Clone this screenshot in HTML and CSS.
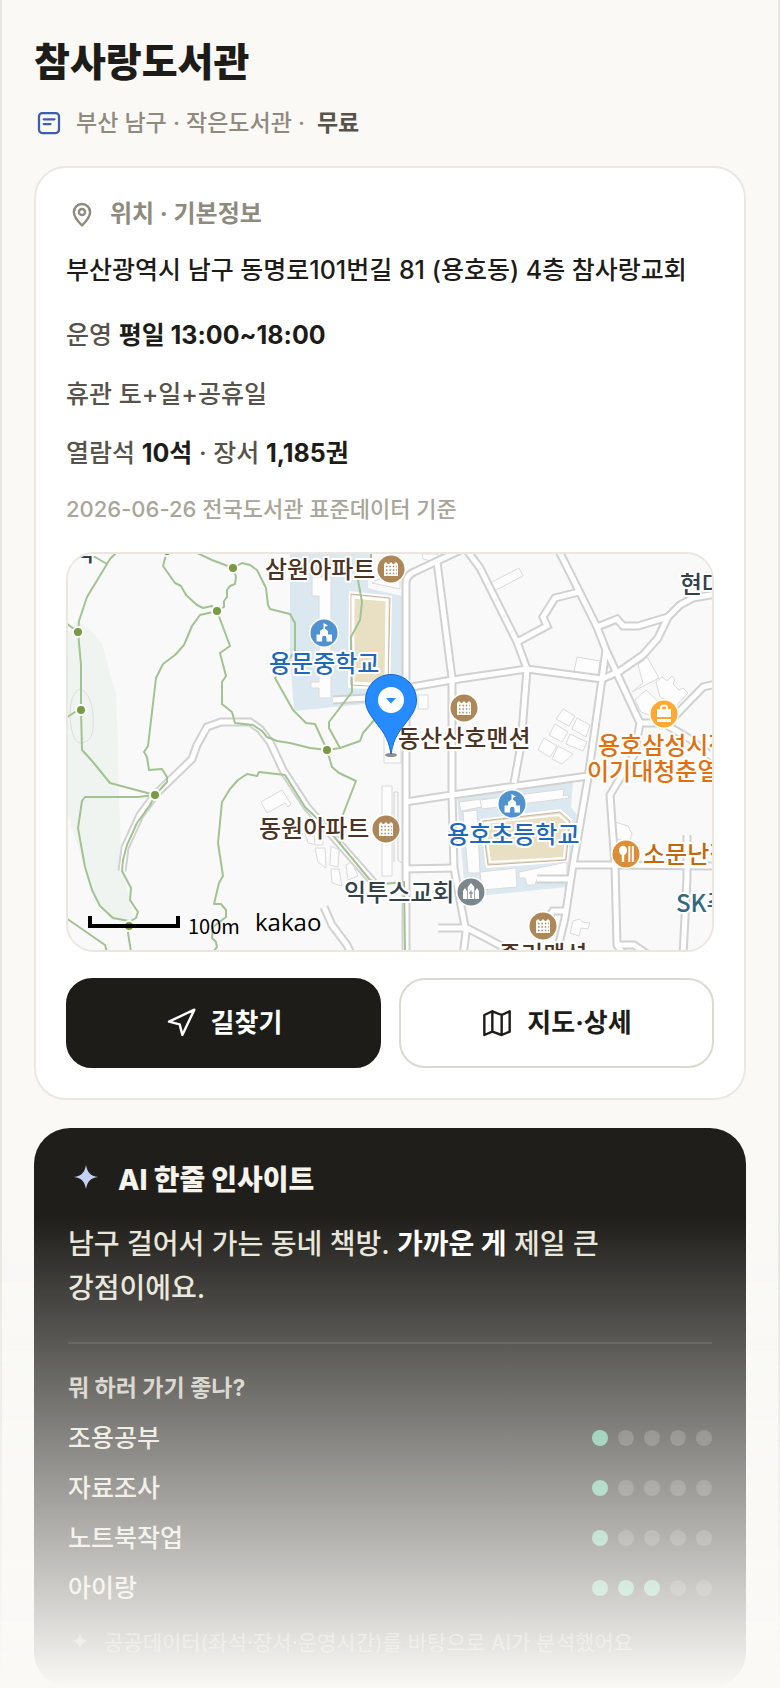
FILE: index.html
```html
<!DOCTYPE html>
<html lang="ko">
<head>
  <meta charset="UTF-8">
  <meta name="viewport" content="width=device-width, initial-scale=1.0">
  <title>참사랑도서관</title>
  <link rel="stylesheet" href="styles.css">
</head>
<body>
  <main class="page">
    <header class="head">
      <h1>참사랑도서관</h1>
      <p class="sub">
        <svg class="icon-kind" viewBox="0 0 24 24" aria-hidden="true">
          <rect x="4" y="4" width="16" height="16" rx="2.6"/>
          <path d="M7.8 9h8.6M7.8 12.8h5.4"/>
        </svg>
        <span>부산 남구 · 작은도서관 ·</span>
        <b>무료</b>
      </p>
    </header>

    <section class="card">
      <h2 class="card-title">
        <svg class="icon" viewBox="0 0 24 24" aria-hidden="true">
          <path d="M12 20.6c-3.6-3.7-6.1-6.6-6.1-10a6.1 6.1 0 0 1 12.2 0c0 3.4-2.5 6.3-6.1 10z"/>
          <circle cx="12" cy="10.5" r="2.3"/>
        </svg>
        위치 · 기본정보
      </h2>
      <p class="address">부산광역시 남구 동명로101번길 81 (용호동) 4층 참사랑교회</p>
      <p class="info">운영 <b>평일 13:00~18:00</b></p>
      <p class="info">휴관 토+일+공휴일</p>
      <p class="info">열람석 <b>10석</b> · 장서 <b>1,185권</b></p>
      <p class="source">2026-06-26 전국도서관 표준데이터 기준</p>

      <div class="map">
        <svg class="map-svg" viewBox="68 554 644 396" preserveAspectRatio="xMidYMid slice" role="img" aria-label="참사랑도서관 주변 지도">
          <defs>
            <g id="poi-apt">
              <circle class="ring" r="15"/>
              <circle r="13.5" fill="#ad8758"/>
              <path d="M-7 7v-12l2-2 2 2h1l2-2 2 2h1l2-2 2 2v12z" fill="#fff"/>
              <path d="M-5-2.5H6M-5 1H6M-5 4.5H6" stroke="#ad8758" stroke-width="1.5" stroke-dasharray="1.5 1.9"/>
            </g>
            <g id="poi-school">
              <circle class="ring" r="15"/>
              <circle r="13.5" fill="#4f92cf"/>
              <path d="M-7.5 8.5V1.5H-4V-2L-.5-4.5V-10L4-7.5.8-6V-4.5L4-2V1.5H8V8.5H2.5V5a2.2 2.2 0 0 0-4.4 0V8.5z" fill="#fff"/>
            </g>
            <g id="roads">
              <path d="M122 871 125 848 140 815 155 795 192 759 197 745 207 727 221 722H250L260 729 270 742 283 770 307 807 375 884"/>
              <path d="M406 956V582Q407 575 414 572L463 549"/>
              <path d="M437 562 452 678 452 795 454 868 466 932 463 956"/>
              <path d="M406 688 452 680 527 669 602 679 620 671 643 655 658 638 668 617 680 605 693 598 716 594"/>
              <path d="M463 545 480 568 517 642 527 669 521 745 514 783"/>
              <path d="M558 549 597 627 606 650 640 723 634 755 610 795 615 865 617 945 625 956"/>
              <path d="M606 650 602 679 588 778 573 865 565 918 556 956"/>
              <path d="M597 627 617 619 623 626H638L668 617"/>
              <path d="M517 642 547 626 543 617 555 598 579 592"/>
              <path d="M640 723H663L690 739 716 760"/>
              <path d="M675 716 703 687 716 684"/>
              <path d="M405 802 452 795 588 776"/>
              <path d="M405 869 454 868"/>
              <path d="M575 865H615L716 866"/>
              <path d="M687 835V878L683 956"/>
              <path d="M438 928H467L490 940 512 952"/>
              <path d="M537 879H571"/>
              <path d="M548 918 553 911H566"/>
              <path d="M324 907 332 925 347 945 352 956"/>
              <path d="M333 700 367 698"/>
              <path d="M617 945H634L650 956"/>
            </g>
          </defs>

          <rect x="68" y="554" width="644" height="396" fill="#f9f9f9"/>

          <!-- park, school grounds -->
          <path fill="#eff4f1" d="M68 632 78 621 88 628 102 643 116 695 118 740 119 800 122 870 131 905 133 920 110 920 90 885 68 815z"/>
          <path class="contour" d="M80 689c8 2 13 16 13 27 1 17-1 25-12 27-8 0-11-17-11-30 0-12 4-22 10-24z"/>
          <path fill="#dce8f0" d="M290 554H370L368 588 402 596V695L365 704 294 711 290 660z"/>
          <path fill="#dce8f0" d="M457 797 573 782 571 807 577 815 570 877 567 887 487 895 465 894z"/>

          <!-- sports fields -->
          <path fill="#fff" d="M349 591 392 596 390 690 348 688z"/>
          <path fill="#e9dfc2" stroke="#cdb3a2" d="M351 594 390 598 388 687 351 685z"/>
          <path fill="none" stroke="#fff" stroke-width="3" d="M353 597 387 600 386 685 353 683z"/>
          <path fill="#fff" d="M480 819 560 809 572 819 568 862 486 868z"/>
          <path fill="#e9dfc2" stroke="#cdb3a2" d="M482 821 560 812 570 821 566 860 488 865z"/>
          <path fill="none" stroke="#fff" stroke-width="2" d="M485 823 559 815 567 822 564 858 490 862z"/>

          <!-- buildings -->
          <g class="building">
            <path d="M312 577H331V698H319V688H311V682H319V596H312z"/>
            <path d="M372 583 400 589 400 578 388 574z"/>
            <path d="M418 695H428V709H418z"/>
            <path d="M459 802 490 798 492 805 461 811z"/>
            <path d="M463 812 477 810 480 873 468 873z"/>
            <path d="M480 800 564 789 563 796 568 795 569 798 482 809z"/>
            <path d="M480 872 516 868 517 887 482 890z"/>
            <path d="M519 872 567 862V875L537 879 535 885H527L525 878H519z"/>
            <path d="M382 786H392V876H382z"/>
            <path d="M384 736 401 736V763H384z"/>
            <path d="M261 802 282 790 291 804 288 807 285 803 267 813z"/>
            <path d="M302 824 311 815 318 845 308 843z"/>
            <path d="M315 848H325L326 868 318 862z"/>
            <path d="M331 846 339 850 338 867 330 865z"/>
            <path d="M331 869H339L342 886 332 883z"/>
            <path d="M346 865 352 862 358 876 348 880z"/>
            <path d="M314 832H323V845H315z"/>
            <path d="M490 583 519 568 523 576 494 591z"/>
            <path d="M577 657 600 661 598 676 574 672z"/>
            <path d="M632 692 643 683 638 665 647 657 659 678z"/>
            <path d="M656 682 662 677 667 681 672 676 675 679 673 684 679 690 683 688 688 693 676 706 660 697z"/>
            <path d="M635 700 646 690 662 705 655 717 641 712z"/>
            <path d="M563 709 575 716 569 726 556 719z"/>
            <path d="M577 718 590 725 586 737 572 729z"/>
            <path d="M555 724 568 732 562 742 549 735z"/>
            <path d="M570 734 587 742 583 751 566 744z"/>
            <path d="M544 738 557 746 550 757 538 750z"/>
            <path d="M558 746 573 754 562 764 552 759z"/>
            <path d="M615 822 628 826 632 834 629 842 617 839z"/>
            <path d="M573 921 580 919 582 922 590 923 588 929 581 928 579 936 570 933z"/>
            <path d="M422 554 423 559 431 561 438 557V554z"/>
          </g>

          <!-- roads: grey casing first, white surface on top -->
          <path class="alley" d="M394 862V792H398V860L403 864"/>
          <use class="road-case" href="#roads"/>
          <use class="road-fill" href="#roads"/>

          <!-- walking trails -->
          <g class="trail">
            <path d="M118 551 110 559 107 564 87 597 79 621 78 632 81 665V710L82 750 93 762 110 783 155 795"/>
            <path d="M82 557H95L107 564M66 623 78 632M66 718 75 712 81 710"/>
            <path d="M167 551 163 566 175 583 181 586 186 595 197 605 203 608 212 606 217 611"/>
            <path d="M195 552 212 560 233 568 242 563 250 565 257 570 266 588 268 605 270 609 290 614 295 623V652L288 660 275 678 293 710 306 723 315 724 327 750"/>
            <path d="M233 568 236 577 235 584 230 586 227 590V597L224 601V607L217 611"/>
            <path d="M217 611 200 615 192 626 184 645 175 655 163 664 156 678 148 746 144 752 147 757 149 770 162 769 167 777V782L155 795"/>
            <path d="M217 611 230 646 220 653 226 676 222 682V704L232 712 235 723 253 725 262 731 267 737 277 741 290 743 310 748 327 750 340 748 360 741 363 733 376 718"/>
            <path d="M340 748 329 728V722L352 692 351 637 360 620 362 602 358 580 358 572 371 565V552"/>
            <path d="M327 750 332 767 339 773 356 781 342 817 340 845"/>
            <path d="M155 795 150 805 137 823 127 845 123 860 122 871 131 888 130 900 138 912 136 918 129 922V926L128 933 131 952"/>
            <path d="M155 795 138 797H85L82 801 78 828 85 867 92 890 100 906 113 918 129 921"/>
            <path d="M66 918 105 945 107 952"/>
            <path d="M213 952 217 947 216 942 212 938 213 927 226 917V910L221 904H214L219 883 223 876 218 843 222 802 230 789 238 780 247 774 257 776 259 772 285 775 305 807 327 828 370 880 383 884 404 882 405 952"/>
          </g>
          <g class="trail-node">
            <circle cx="78" cy="632" r="5"/>
            <circle cx="81" cy="710" r="5"/>
            <circle cx="217" cy="611" r="5"/>
            <circle cx="233" cy="568" r="5"/>
            <circle cx="167" cy="551" r="5"/>
            <circle cx="155" cy="795" r="5"/>
            <circle cx="327" cy="750" r="5"/>
            <circle cx="129" cy="926" r="5"/>
          </g>

          <!-- places -->
          <use href="#poi-apt" x="391" y="569"/>
          <use href="#poi-school" x="324" y="633"/>
          <use href="#poi-apt" x="464" y="708"/>
          <use href="#poi-apt" x="386" y="829"/>
          <use href="#poi-school" x="512" y="804"/>
          <use href="#poi-apt" x="543" y="926"/>
          <g transform="translate(664 714)">
            <circle class="ring" r="15"/>
            <circle r="13.5" fill="#fdaa35"/>
            <path d="M-7-5H7V3H-7zM-7 5H7V8H-7z" fill="#fff"/>
            <path d="M-3-5V-6.5a3 2 0 0 1 6 0V-5" fill="none" stroke="#fff" stroke-width="1.8"/>
          </g>
          <g transform="translate(626 854)">
            <circle class="ring" r="15"/>
            <circle r="13.5" fill="#dc8e36"/>
            <ellipse cx="-3" cy="-3.5" rx="4" ry="4.8" fill="#fff"/>
            <path d="M-3 0V8" stroke="#fff" stroke-width="2.4"/>
            <path d="M3.3-8V8M6.8-8V8" stroke="#fff" stroke-width="2"/>
          </g>
          <g transform="translate(471 892)">
            <circle class="ring" r="15"/>
            <circle r="13.5" fill="#7b878d"/>
            <path d="M-8 7V-1L-6-4-4-1V7zM4 7V-1L6-4 8-1V7zM-3.3 7V-5L0-9 3.3-5V7z" fill="#fff"/>
            <path d="M0-1.5V6M-2 1H2" stroke="#7b878d" stroke-width="1.2"/>
          </g>

          <g class="place">
            <text class="dark" x="73" y="561">목</text>
            <text x="265" y="578">삼원아파트</text>
            <text class="blue" x="269" y="672">용문중학교</text>
            <text x="398" y="747">동산산호맨션</text>
            <text x="259" y="837">동원아파트</text>
            <text class="blue" x="447" y="843">용호초등학교</text>
            <text class="dark" x="344" y="901">익투스교회</text>
            <text x="499" y="963">중리맨션</text>
            <text class="dark" x="680" y="593">현대</text>
            <text class="orange" x="598" y="754">용호삼성시장</text>
            <text class="orange" x="587" y="780">이기대청춘열</text>
            <text class="food" x="643" y="863">소문난집</text>
            <text class="teal" x="676" y="912">SK주유소</text>
          </g>

          <!-- current library -->
          <ellipse cx="391" cy="755" rx="6" ry="2" fill="#444" opacity=".6"/>
          <path d="M391 754C388 736 382 731 374 720 368 712 365.5 707 365.5 700a25.5 25.5 0 0 1 51 0C416.5 707 414 712 408 720 400 731 394 736 391 754z" fill="#258bff" stroke="#1668cf"/>
          <circle cx="391" cy="700" r="13" fill="#fff"/>
          <path d="M386 698H396L391 703.5z" fill="#258bff"/>

          <path d="M90 916V926H178V916" fill="none" stroke="#000" stroke-width="4"/>
          <text class="scale" x="188" y="934">100m</text>
          <text class="brand" x="255" y="931">kakao</text>
        </svg>
      </div>

      <div class="actions">
        <a class="btn btn-dark" href="#route">
          <svg class="icon" viewBox="0 0 24 24" aria-hidden="true"><path d="M3 11 22 2 13 21 11 13z"/></svg>
          길찾기
        </a>
        <a class="btn" href="#detail">
          <svg class="icon" viewBox="0 0 24 24" aria-hidden="true"><path d="M2.5 6 8.5 3.2 15.5 6 21.5 3.2V18.5L15.5 21 8.5 18.5 2.5 21zM8.5 3.2V18.5M15.5 6V21"/></svg>
          지도·상세
        </a>
      </div>
    </section>

    <section class="insight">
      <h2 class="insight-title">
        <svg class="icon-spark" viewBox="0 0 24 24" aria-hidden="true"><path d="M12 2c.9 5 2.8 7.200 8 8-5.200.8-7.100 3-8 8-.9-5-2.800-7.200-8-8 5.200-.8 7.100-3 8-8z"/></svg>
        AI 한줄 인사이트
      </h2>
      <p class="insight-text">남구 걸어서 가는 동네 책방. <b>가까운 게</b> 제일 큰 강점이에요.</p>

      <div class="scores">
        <h3>뭐 하러 가기 좋나?</h3>
        <ul>
          <li>조용공부 <span class="dots" role="img" aria-label="5점 중 1점"><i class="on"></i><i></i><i></i><i></i><i></i></span></li>
          <li>자료조사 <span class="dots" role="img" aria-label="5점 중 1점"><i class="on"></i><i></i><i></i><i></i><i></i></span></li>
          <li>노트북작업 <span class="dots" role="img" aria-label="5점 중 1점"><i class="on"></i><i></i><i></i><i></i><i></i></span></li>
          <li>아이랑 <span class="dots" role="img" aria-label="5점 중 3점"><i class="on"></i><i class="on"></i><i class="on"></i><i></i><i></i></span></li>
        </ul>
      </div>

      <p class="note">
        <svg class="icon-note" viewBox="0 0 24 24" aria-hidden="true"><path d="M12 2c.9 5 2.8 7.200 8 8-5.200.8-7.100 3-8 8-.9-5-2.800-7.200-8-8 5.200-.8 7.100-3 8-8z"/></svg>
        공공데이터(좌석·장서·운영시간)를 바탕으로 AI가 분석했어요
      </p>
    </section>
  </main>
  <div class="fade"></div>
</body>
</html>
```

FILE: styles.css
```css
* {
  box-sizing: border-box;
}

body {
  margin: 0;
  background: #faf9f6;
  color: #1d1c18;
  font-family: Inter, "Noto Sans CJK KR", sans-serif;
  font-weight: 500;
  word-break: keep-all;
}

h1, h2, h3, p, ul {
  margin: 0;
  padding: 0;
}

.page {
  min-height: 100vh;
  padding: 36px 32px 0;
  border-left: 2px solid #e9e7e0;
  border-right: 2px solid #e9e7e0;
}

/* header */
.head {
  margin-bottom: 24px;
}

h1 {
  margin-bottom: 16px;
  font-size: 39px;
  font-weight: 800;
  line-height: 52px;
}

.sub {
  display: flex;
  align-items: center;
  gap: 12px;
  color: #8f8a7e;
  font-size: 23px;
  line-height: 38px;
}

.sub b {
  color: #57534a;
  font-weight: 700;
}

svg {
  flex-shrink: 0;
}

.icon-kind,
.icon {
  fill: none;
  stroke: currentColor;
  stroke-width: 1.8;
  stroke-linecap: round;
  stroke-linejoin: round;
}

.icon-kind {
  width: 30px;
  height: 30px;
  color: #3f5cb0;
}

.icon {
  width: 32px;
  height: 32px;
}

/* location card */
.card {
  margin-bottom: 28px;
  padding: 30px;
  background: #fff;
  border: 2px solid #ebe8e2;
  border-radius: 32px;
}

.card-title {
  display: flex;
  align-items: center;
  gap: 12px;
  margin-bottom: 20px;
  color: #8f8a7e;
  font-size: 24px;
  font-weight: 700;
  line-height: 32px;
}

.address {
  margin-bottom: 25px;
  font-size: 25px;
  line-height: 40px;
}

.info {
  margin-bottom: 19px;
  color: #57534a;
  font-size: 25px;
  line-height: 40px;
}

.info b {
  color: #1d1c18;
  font-weight: 700;
}

.source {
  margin-bottom: 26px;
  color: #a9a598;
  font-size: 22px;
  line-height: 34px;
}

.map {
  overflow: hidden;
  border: 2px solid #ebe6e0;
  border-radius: 28px;
}

.map-svg {
  display: block;
  width: 100%;
  height: 396px;
}

.ring {
  fill: #fff;
}

.contour {
  fill: none;
  stroke: #dcdcdc;
}

.building {
  fill: #fdfdfe;
  stroke: #dadada;
}

.alley {
  fill: none;
  stroke: #d1d1d1;
}

.road-case {
  fill: none;
  stroke: #d1d1d1;
  stroke-width: 9;
}

.road-fill {
  fill: none;
  stroke: #fff;
  stroke-width: 5;
}

.trail {
  fill: none;
  stroke: #a2c391;
  stroke-width: 2;
  stroke-linejoin: round;
}

.trail-node {
  fill: #779a42;
  stroke: #fff;
  stroke-width: 2;
}

.place {
  fill: #4c3324;
  stroke: #fff;
  stroke-width: 4px;
  stroke-linejoin: round;
  paint-order: stroke;
  font-family: "Noto Sans CJK KR", sans-serif;
  font-size: 24px;
}

.place .dark {
  fill: #34424a;
}

.place .blue {
  fill: #1f69b8;
}

.place .orange {
  fill: #e0700f;
}

.place .food {
  fill: #c4660a;
}

.place .teal {
  fill: #34697f;
}

.scale {
  font-family: "Noto Sans CJK KR", sans-serif;
  font-size: 20px;
  font-weight: 400;
}

.brand {
  font-family: "Open Sans", sans-serif;
  font-size: 24px;
}

.actions {
  display: grid;
  grid-template-columns: 1fr 1fr;
  gap: 18px;
  margin-top: 26px;
}

.btn {
  display: flex;
  align-items: center;
  justify-content: center;
  gap: 14px;
  height: 90px;
  border: 2px solid #dcd9d0;
  border-radius: 26px;
  background: #fff;
  color: #1d1c18;
  font-size: 26px;
  font-weight: 700;
  line-height: 32px;
  text-decoration: none;
}

.btn-dark {
  border-color: #1d1c18;
  background: #1d1c18;
  color: #fff;
}

/* insight card */
.insight {
  padding: 32px 34px 30px;
  background: #1f1e1b;
  border-radius: 36px;
  color: #e8e5da;
}

.insight-title {
  display: flex;
  align-items: center;
  gap: 14px;
  margin-bottom: 22px;
  color: #f5f3ec;
  font-size: 28px;
  font-weight: 800;
  line-height: 40px;
}

.icon-spark {
  width: 36px;
  height: 36px;
  fill: #c5d1f2;
}

.insight-text {
  font-size: 28px;
  line-height: 44px;
}

.insight-text b {
  color: #fff;
  font-weight: 700;
}

.scores {
  margin-top: 32px;
  padding-top: 28px;
  border-top: 2px solid rgba(255, 255, 255, 0.1);
}

.scores h3 {
  margin-bottom: 19px;
  color: #cac7bc;
  font-size: 23px;
  font-weight: 700;
  line-height: 32px;
}

.scores ul {
  display: grid;
  gap: 20px;
  list-style: none;
}

.scores li {
  display: flex;
  align-items: center;
  justify-content: space-between;
  font-size: 25px;
  line-height: 30px;
}

.dots {
  display: flex;
  gap: 10px;
}

.dots i {
  width: 16px;
  height: 16px;
  border-radius: 50%;
  background: rgba(255, 255, 255, 0.18);
}

.dots .on {
  background: #5ab791;
}

.note {
  display: flex;
  align-items: center;
  gap: 12px;
  margin-top: 25px;
  color: #8f8c80;
  font-size: 21px;
  font-weight: 400;
  line-height: 30px;
}

.icon-note {
  width: 24px;
  height: 24px;
  fill: currentColor;
}

/* bottom fade over the scrolling content */
.fade {
  position: fixed;
  right: 0;
  bottom: 0;
  left: 0;
  height: 28vh;
  background: linear-gradient(rgba(250, 249, 246, 0), #faf9f6);
  pointer-events: none;
}
```
